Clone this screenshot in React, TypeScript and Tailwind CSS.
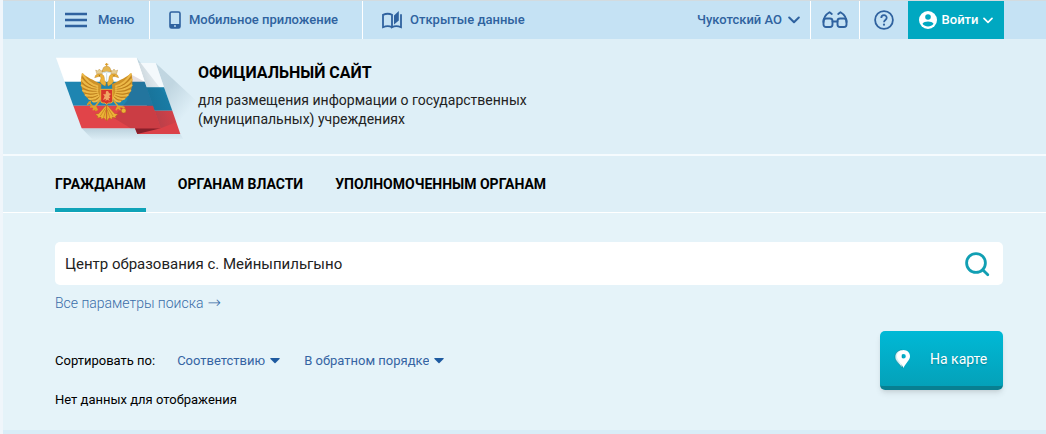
import React from 'react';

const tabs = ['ГРАЖДАНАМ', 'ОРГАНАМ ВЛАСТИ', 'УПОЛНОМОЧЕННЫМ ОРГАНАМ'];

// One half of the eagle, the other one is mirrored
const EagleHalf = () => (
  <g>
    <path d="M172 112 C160 104 144 100 126 84 C122 100 121 118 127 136 C134 154 146 166 162 170 L182 160 L184 118 Z" fill="#cf9228" />
    <g stroke="#ecb948" strokeWidth="6" strokeLinecap="round" fill="none">
      <path d="M172 124 Q146 118 128 88" />
      <path d="M172 130 Q142 126 125 104" />
      <path d="M172 136 Q144 136 125 121" />
      <path d="M172 142 Q148 146 129 137" />
      <path d="M174 148 Q152 156 137 150" />
      <path d="M176 153 Q160 166 147 161" />
      <path d="M180 158 Q172 172 159 169" />
    </g>
    <g stroke="#a8690f" strokeWidth="1.5" fill="none">
      <path d="M170 127 Q144 122 128 97" />
      <path d="M170 133 Q142 131 126 113" />
      <path d="M170 139 Q146 141 128 130" />
      <path d="M172 145 Q150 151 134 144" />
      <path d="M174 151 Q156 161 143 156" />
      <path d="M178 156 Q166 169 154 166" />
    </g>
    <path d="M196 124 C184 118 176 112 182 103 C185 97 181 93 174 95 L164 98 L167 91 C172 86 185 84 191 92 C195 99 191 106 199 113 Z" fill="#edb238" stroke="#a8690f" strokeWidth="1" />
    <circle cx="178" cy="92" r="1.5" fill="#5f3c08" />
    <path d="M170 86 L167 75 L173 78 L178 72 L183 78 L189 75 L187 86 Z" fill="#e6cf95" stroke="#b07a20" strokeWidth="1" />
    <path d="M178 168 L166 184 L152 186 M166 184 L160 194 M166 184 L171 194" stroke="#e0a32c" strokeWidth="5" strokeLinecap="round" fill="none" />
    <path d="M199 180 L176 206 L166 208 L174 214 L172 219 L183 216 L184 223 L192 218 L199 227 Z" fill="#edb238" stroke="#a8690f" strokeWidth="1" />
    <path d="M196 190 L181 213 M198 194 L191 217" stroke="#a8690f" strokeWidth="1.5" />
  </g>
);

const Emblem = () => (
  <svg viewBox="45 30 429 270" className="h-[90px] w-[143px] shrink-0" aria-hidden="true">
    <defs>
      <linearGradient id="castRight" gradientUnits="userSpaceOnUse" x1="370" y1="150" x2="440" y2="205">
        <stop offset="0" stopColor="#8aa8b8" stopOpacity="0.35" />
        <stop offset="1" stopColor="#8aa8b8" stopOpacity="0" />
      </linearGradient>
      <linearGradient id="castBottom" x1="0" y1="0" x2="0" y2="1">
        <stop offset="0" stopColor="#8aa8b8" stopOpacity="0.4" />
        <stop offset="1" stopColor="#8aa8b8" stopOpacity="0" />
      </linearGradient>
      <linearGradient id="foldShade" gradientUnits="userSpaceOnUse" x1="310" y1="130" x2="370" y2="110">
        <stop offset="0" stopColor="#10394f" stopOpacity="0.18" />
        <stop offset="1" stopColor="#10394f" stopOpacity="0.04" />
      </linearGradient>
    </defs>
    <path d="M347 54 L474 172 L474 220 L410 236 Z" fill="url(#castRight)" />
    <path d="M125 250 L290 250 L292 267 L421 267 L430 282 L160 286 Z" fill="url(#castBottom)" />
    <path d="M295 54 H347 L372 127 H305 Z" fill="#f4f9fc" />
    <path d="M305 127 H372 L397 197 H325 Z" fill="#1a7fa9" />
    <path d="M325 197 H397 L421 267 H292 L285 250 Z" fill="#db4148" />
    <path d="M290 38 L384 160 L409 232 L362 250 Z" fill="url(#foldShade)" />
    <path d="M285 250 H362 L292 267 Z" fill="#87202b" />
    <path d="M48 38 H290 L314 110 H74 Z" fill="#fff" />
    <path d="M74 110 H314 L339 182 H100 Z" fill="#1e85b1" />
    <path d="M100 182 H339 L362 250 H125 Z" fill="#e14449" />
    <path d="M272 88 L314 110 L362 250 H272 L220 218 L262 166 Z" fill="#49172a" opacity="0.14" />
    <path d="M147 172 L168 196 M143 178 L151 170" stroke="#d99a25" strokeWidth="5" strokeLinecap="round" />
    <EagleHalf />
    <g transform="translate(400 0) scale(-1 1)">
      <EagleHalf />
    </g>
    <path d="M186 80 L190 68 Q200 58 210 68 L214 80 Z" fill="#e5b650" stroke="#a8690f" strokeWidth="1" />
    <path d="M200 54 V64 M195 58 H205" stroke="#d99a25" strokeWidth="3" />
    <path d="M187 84 Q200 77 213 84 M200 84 V110" stroke="#c8dfe5" strokeWidth="3" fill="none" />
    <circle cx="251" cy="197" r="7" fill="#edb238" stroke="#a8690f" />
    <path d="M251 184 V190 M247 187 H255" stroke="#edb238" strokeWidth="2" />
    <path d="M182 133 H218 V167 Q218 174 211 174 H206 L200 178 L194 174 H189 Q182 174 182 167 Z" fill="#d7362b" stroke="#edb238" strokeWidth="3" />
    <path d="M189 165 L194 154 L189 148 L197 148 L198 139 L204 138 L207 144 L213 147 L207 153 L211 158 L205 161 L210 168 L202 164 L196 168 L198 161 Z" fill="#f0a763" />
  </svg>
);

const PhoneIcon = () => (
  <svg viewBox="0 0 12 18" className="h-[18px] w-3" aria-hidden="true">
    <rect x="1" y="1" width="10" height="16" rx="1.5" fill="none" stroke="currentColor" strokeWidth="1.6" />
    <path d="M1 13 H11 V16 Q11 17 10 17 H2 Q1 17 1 16 Z" fill="currentColor" />
    <circle cx="6" cy="15" r="0.9" fill="#c5e2f4" />
  </svg>
);

const BookIcon = () => (
  <svg viewBox="0 0 20 18" className="h-[18px] w-5" aria-hidden="true">
    <path d="M10 16.2 C7.5 14.8 4 14.8 1 16.2 V3.8 C4 2.500 7.500 2.500 10 3.800 V16.200 C12.500 14.800 16 14.800 19 16.200 V3.200" fill="none" stroke="currentColor" strokeWidth="1.8" />
    <path d="M12 4.500 L16.800 0 V9.500 L12 13.500 Z" fill="currentColor" />
  </svg>
);

const GlassesIcon = () => (
  <svg viewBox="0 0 26 18" className="h-[18px] w-[26px]" fill="none" stroke="currentColor" strokeWidth="1.9" strokeLinecap="round" strokeLinejoin="round" aria-hidden="true">
    <rect x="1.5" y="7.5" width="9" height="8.5" rx="2.500" />
    <rect x="15.5" y="7.5" width="9" height="8.5" rx="2.500" />
    <path d="M10.500 10.500 H15.500 M1.500 11 C1.500 7 4.500 3 7.500 1.200 L9.800 3 M24.500 11 C24.500 7 21.500 3 18.500 1.200 L16.200 3" />
  </svg>
);

const HelpIcon = () => (
  <svg viewBox="0 0 20 20" className="h-5 w-5" fill="none" stroke="currentColor" strokeWidth="1.8" aria-hidden="true">
    <circle cx="10" cy="10" r="8.9" />
    <path d="M7.3 8 C7.3 4.3 12.7 4.3 12.7 7.8 C12.7 10 10 10 10 12.3" />
    <circle cx="10" cy="14.7" r="1.1" fill="currentColor" stroke="none" />
  </svg>
);

const UserIcon = () => (
  <svg viewBox="0 0 18 18" className="h-[18px] w-[18px]" aria-hidden="true">
    <circle cx="9" cy="9" r="9" fill="#fff" />
    <circle cx="9" cy="6" r="2.8" fill="#00a8c1" />
    <path d="M3.5 12.8 C5 9.8 13 9.8 14.5 12.8 C12 16.3 6 16.3 3.5 12.8 Z" fill="#00a8c1" />
  </svg>
);

const Chevron = ({ className }: { className: string }) => (
  <svg viewBox="0 0 12 8" className={className} fill="none" stroke="currentColor" strokeWidth="2" strokeLinecap="round" strokeLinejoin="round" aria-hidden="true">
    <path d="M1.2 1.500 L6 6.300 L10.800 1.500" />
  </svg>
);

const Caret = () => (
  <svg viewBox="0 0 10 6" className="pointer-events-none h-[6px] w-[10px] text-[#1e5aa0]" aria-hidden="true">
    <path d="M0.5 0 H9.5 Q10 0.5 9.5 1 L5.5 5 Q5 5.5 4.5 5 L0.5 1 Q0 0.5 0.5 0 Z" fill="currentColor" />
  </svg>
);

const TopBar = () => (
  <div className="flex h-[39px] justify-between border-t border-[#d3dbdf] bg-[#c5e2f4] pr-[42px] pl-[51px] text-[13px] font-medium whitespace-nowrap text-[#2f629f]">
    <div className="flex">
      <button className="flex w-24 items-center gap-[11px] border-x border-white pl-[10px]">
        <svg viewBox="0 0 22 16" className="h-4 w-[22px]" aria-hidden="true">
          <path d="M0 2 H22 M0 8 H22 M0 14 H22" stroke="currentColor" strokeWidth="2.4" />
        </svg>
        Меню
      </button>
      <a href="#mobile" className="flex w-[213px] items-center gap-2 border-r border-white pl-[19px]">
        <PhoneIcon />
        Мобильное приложение
      </a>
      <a href="#opendata" className="flex items-center gap-2 pl-[19px]">
        <BookIcon />
        Открытые данные
      </a>
    </div>
    <div className="flex">
      <button className="flex items-center gap-[6px] pr-[10px]">
        Чукотский АО
        <Chevron className="h-2 w-3" />
      </button>
      <button aria-label="Версия для слабовидящих" className="flex w-[50px] items-center justify-center border-x border-white">
        <GlassesIcon />
      </button>
      <button aria-label="Помощь" className="flex w-12 items-center justify-center">
        <HelpIcon />
      </button>
      <button className="flex w-24 items-center justify-center gap-[5px] bg-[#00a8c1] text-white">
        <UserIcon />
        Войти
        <Chevron className="h-[7px] w-[10px]" />
      </button>
    </div>
  </div>
);

const App = () => {
  return (
    <div className="min-h-screen bg-[#f0f6fb] pl-[3px] font-['Roboto',sans-serif] text-black">
      <div className="flex min-h-screen flex-col bg-[#d9edf7]">
        <TopBar />

        <header className="flex h-[117px] border-b-2 border-[#f5fbfe] bg-[#deeff7] pt-4 pl-[52px]">
          <Emblem />
          <div className="pt-2">
            <h1 className="text-base leading-5 font-bold">ОФИЦИАЛЬНЫЙ САЙТ</h1>
            <p className="pt-2 text-sm leading-[19px] text-[#222]">
              для размещения информации о государственных
              <br />
              (муниципальных) учреждениях
            </p>
          </div>
        </header>

        <nav className="flex h-[57px] gap-8 border-b border-white bg-[#deeff7] pl-[52px] text-sm font-bold">
          {tabs.map((tab, i) => (
            <a
              key={tab}
              href={`#tab${i}`}
              className={i === 0 ? 'flex items-center border-b-4 border-[#0fa3b8] pt-1' : 'flex items-center border-b-4 border-transparent pt-1'}
            >
              {tab}
            </a>
          ))}
        </nav>

        <main className="bg-[#e5f3f9] pt-[29px] pr-[43px] pb-5 pl-[52px]">
          <form className="flex h-[43px] items-center rounded-[5px] bg-white pr-[13px] pl-[10px]" onSubmit={(e) => e.preventDefault()}>
            <input
              type="text"
              aria-label="Поиск учреждений"
              defaultValue="Центр образования с. Мейныпильгыно"
              className="h-full flex-1 bg-transparent text-[15px] text-[#222] outline-none"
            />
            <button type="submit" aria-label="Найти" className="text-[#119fb3]">
              <svg viewBox="0 0 26 26" className="h-[26px] w-[26px]" fill="none" stroke="currentColor" strokeWidth="2.8" strokeLinecap="round" aria-hidden="true">
                <circle cx="12" cy="12" r="9.4" />
                <path d="M18.7 18.7 L23.8 23.8" />
              </svg>
            </button>
          </form>
          <a href="#params" className="mt-2 flex items-center gap-1 text-sm leading-5 font-light text-[#3a6da8]">
            Все параметры поиска
            <span className="font-['DejaVu_Sans',sans-serif] text-base leading-5">→</span>
          </a>

          <div className="flex items-start justify-between pt-[18px]">
            <div className="pt-5 text-[13px] leading-5">
              <div className="flex items-center">
                <label htmlFor="sort">Сортировать по:</label>
                <div className="ml-[22px] flex items-center gap-[5px] text-[#3564a3]">
                  <select id="sort" className="field-sizing-content appearance-none bg-transparent outline-none">
                    <option>Соответствию</option>
                  </select>
                  <Caret />
                </div>
                <div className="ml-[24px] flex items-center gap-[5px] text-[#3564a3]">
                  <select aria-label="Порядок" className="field-sizing-content appearance-none bg-transparent outline-none">
                    <option>В обратном порядке</option>
                  </select>
                  <Caret />
                </div>
              </div>
              <p className="pt-[19px]">Нет данных для отображения</p>
            </div>
            <button className="flex h-[59px] w-[123px] items-center gap-[18px] rounded-[5px] border-b-4 border-[#087f91] bg-linear-to-b from-[#00b9d6] to-[#04a1b9] pl-[14px] text-sm text-white shadow-md text-shadow-sm">
              <svg viewBox="0 0 18 20" className="h-5 w-[18px]" aria-hidden="true">
                <path d="M8 1 C4 1 1 4 1 8 C1 12 5 14 8 19 Z" fill="#d5f1f6" stroke="#087f91" strokeWidth="0.6" />
                <path fillRule="evenodd" d="M9.5 1 C5.8 1 3 3.8 3 7.3 C3 11.5 7 13.5 9.5 19 C12 13.5 16 11.5 16 7.3 C16 3.8 13.2 1 9.5 1 Z M9.5 5 A2.3 2.3 0 1 1 9.5 9.6 A2.3 2.3 0 1 1 9.5 5 Z" fill="#fff" />
              </svg>
              На карте
            </button>
          </div>
        </main>
      </div>
    </div>
  );
};

export default App;
